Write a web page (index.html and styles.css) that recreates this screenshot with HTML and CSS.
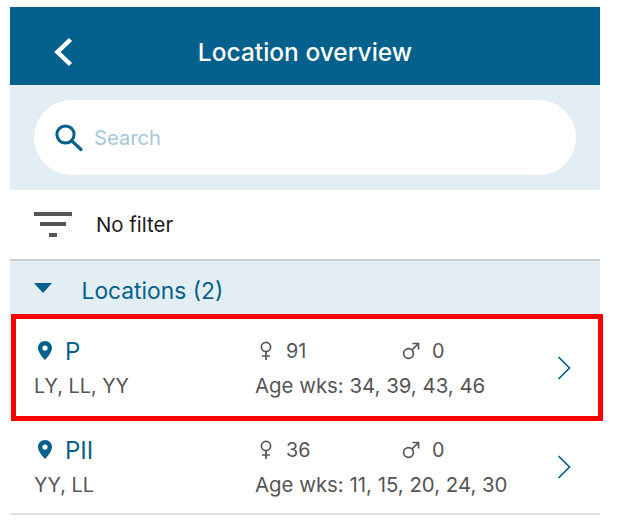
FILE: index.html
```html
<!DOCTYPE html>
<html lang="en">
<head>
  <meta charset="UTF-8">
  <meta name="viewport" content="width=device-width, initial-scale=1.0">
  <title>Location overview</title>
  <link rel="stylesheet" href="styles.css">
</head>
<body>
  <div class="app">
    <!-- Header -->
    <div class="header">
      <svg class="back" width="22" height="30" viewBox="0 0 22 30"><path d="M19.5 2.5 L6.5 15 L19.5 27.5" fill="none" stroke="#fff" stroke-width="4.5"/></svg>
      <h1>Location overview</h1>
    </div>

    <!-- Search -->
    <div class="search-band">
      <div class="search">
        <svg width="30" height="30" viewBox="0 0 30 30"><circle cx="11.5" cy="11.5" r="8.6" fill="none" stroke="#04608c" stroke-width="3"/><path d="M17.8 17.8 L27 26.5" fill="none" stroke="#04608c" stroke-width="3.2" stroke-linecap="round"/></svg>
        <span>Search</span>
      </div>
    </div>

    <!-- Filter -->
    <div class="filter">
      <svg width="38" height="26" viewBox="0 0 38 26"><rect x="0" y="0" width="38" height="4" fill="#555"/><rect x="6" y="10" width="26" height="4" fill="#555"/><rect x="15" y="21" width="8" height="4" fill="#555"/></svg>
      <span>No filter</span>
    </div>

    <!-- Locations -->
    <div class="section">
      <svg width="18" height="10" viewBox="0 0 18 10"><path d="M0 0 H18 L9 10 Z" fill="#04608c"/></svg>
      <span class="section-title">Locations (2)</span>
    </div>

    <div class="row row-first">
      <div class="name">
        <svg class="pin" width="14" height="20" viewBox="0 0 14 20"><path d="M7 0 C3 0 0 3 0 7 C0 12 7 19 7 19 C7 19 14 12 14 7 C14 3 11 0 7 0 Z M7 4.5 A2.6 2.6 0 1 1 7 9.7 A2.6 2.6 0 1 1 7 4.5 Z" fill="#04608c" fill-rule="evenodd"/></svg>
        <span>P</span>
      </div>
      <div class="count female">
        <svg width="14" height="20" viewBox="0 0 14 20"><circle cx="7" cy="6" r="4.6" fill="none" stroke="#555" stroke-width="1.7"/><path d="M7 10.6 V19 M3 15 H11" stroke="#555" stroke-width="1.7"/></svg>
        <span>91</span>
      </div>
      <div class="count male">
        <svg width="18" height="18" viewBox="0 0 18 18"><circle cx="6.5" cy="11.5" r="4.9" fill="none" stroke="#555" stroke-width="1.7"/><path d="M10 8 L16.5 1.5 M10.5 1.5 H16.5 V7.5" fill="none" stroke="#555" stroke-width="1.7"/></svg>
        <span>0</span>
      </div>
      <svg class="chevron" width="14" height="24" viewBox="0 0 14 24"><path d="M1.5 1 L12.5 12 L1.5 23" fill="none" stroke="#04608c" stroke-width="1.7"/></svg>
      <div class="types">LY, LL, YY</div>
      <div class="ages">Age wks: 34, 39, 43, 46</div>
    </div>

    <div class="row">
      <div class="name">
        <svg class="pin" width="14" height="20" viewBox="0 0 14 20"><path d="M7 0 C3 0 0 3 0 7 C0 12 7 19 7 19 C7 19 14 12 14 7 C14 3 11 0 7 0 Z M7 4.5 A2.6 2.6 0 1 1 7 9.7 A2.6 2.6 0 1 1 7 4.5 Z" fill="#04608c" fill-rule="evenodd"/></svg>
        <span>PII</span>
      </div>
      <div class="count female">
        <svg width="14" height="20" viewBox="0 0 14 20"><circle cx="7" cy="6" r="4.6" fill="none" stroke="#555" stroke-width="1.7"/><path d="M7 10.6 V19 M3 15 H11" stroke="#555" stroke-width="1.7"/></svg>
        <span>36</span>
      </div>
      <div class="count male">
        <svg width="18" height="18" viewBox="0 0 18 18"><circle cx="6.5" cy="11.5" r="4.9" fill="none" stroke="#555" stroke-width="1.7"/><path d="M10 8 L16.5 1.5 M10.5 1.5 H16.5 V7.5" fill="none" stroke="#555" stroke-width="1.7"/></svg>
        <span>0</span>
      </div>
      <svg class="chevron" width="14" height="24" viewBox="0 0 14 24"><path d="M1.5 1 L12.5 12 L1.5 23" fill="none" stroke="#04608c" stroke-width="1.7"/></svg>
      <div class="types">YY, LL</div>
      <div class="ages">Age wks: 11, 15, 20, 24, 30</div>
    </div>

    <!-- Red highlight drawn over the first row -->
    <div class="highlight"></div>
  </div>
</body>
</html>
```

FILE: styles.css
```css
body {
  margin: 0;
  padding: 0;
  background-color: #fff;
  font-family: Inter, "Noto Sans", sans-serif;
  color: #555;
}

.app {
  position: relative;
  width: 590px;
  margin: 7px 0 0 10px;
}

.header {
  position: relative;
  height: 78px;
  box-sizing: border-box;
  padding-top: 12px;
  background-color: #04608c;
  display: flex;
  align-items: center;
  justify-content: center;
}

.header h1 {
  margin: 0;
  font-size: 24.5px;
  font-weight: 500;
  color: #fff;
}

.back {
  position: absolute;
  left: 41px;
  top: 30px;
}

.search-band {
  height: 105px;
  box-sizing: border-box;
  padding: 15px 24px;
  background-color: #e3eef4;
}

.search {
  height: 75px;
  border-radius: 38px;
  background-color: #fff;
  display: flex;
  align-items: center;
  gap: 10px;
  padding-left: 20px;
  font-size: 20.2px;
  color: #a6c8d8;
}

.filter {
  height: 69px;
  display: flex;
  align-items: center;
  gap: 24px;
  padding-left: 24px;
  font-size: 20.4px;
  color: #1c1c1c;
}

.section {
  height: 56px;
  box-sizing: border-box;
  border-top: 2px solid #cdcdcd;
  background-color: #e3eef4;
  display: flex;
  align-items: center;
  gap: 29.5px;
  padding-left: 24px;
  font-size: 22.8px;
  color: #04608c;
}

.section-title {
  padding-top: 5px;
}

.row {
  height: 98px;
  box-sizing: border-box;
  padding: 3px 29px 0 24px;
  border-bottom: 2px solid #dedede;
  display: grid;
  grid-template-columns: 221px 147px 1fr 14px;
  grid-template-rows: 36px 33px;
  align-content: center;
  font-size: 19.8px;
}

.row-first {
  height: 102px;
  border-bottom: none;
}

.name {
  display: flex;
  align-items: center;
  gap: 13px;
  padding-left: 4px;
  font-size: 24px;
  color: #04608c;
}

.count {
  display: flex;
  align-items: center;
}

.female {
  gap: 13px;
  padding-left: 4px;
}

.male {
  gap: 12px;
}

.types, .ages {
  display: flex;
  align-items: center;
  white-space: nowrap;
}

.ages {
  grid-column: 2 / 4;
  font-size: 20.4px;
}

.chevron {
  grid-column: 4;
  grid-row: 1 / 3;
  align-self: center;
}

.highlight {
  position: absolute;
  left: 1px;
  top: 307px;
  width: 592px;
  height: 107px;
  box-sizing: border-box;
  border: 5px solid #f00;
}
```
